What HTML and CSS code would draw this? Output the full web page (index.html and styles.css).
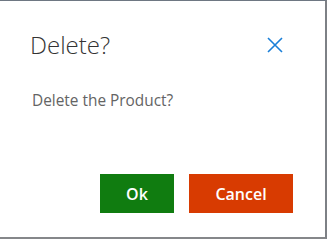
FILE: index.html
```html
<!DOCTYPE html>
<html>
<head>
    <meta charset="UTF-8">
    <title>Delete?</title>
    <link rel="stylesheet" href="styles.css">
</head>
<body>
    <div class="dialog">
        <div class="dialog-header">
            <div class="dialog-title">Delete?</div>
            <button class="close" title="Close">
                <svg width="16" height="16" viewBox="0 0 16 16">
                    <path d="M1 1 L15 15 M15 1 L1 15" stroke="#1a7fd8" stroke-width="1.6" fill="none"/>
                </svg>
            </button>
        </div>
        <div class="dialog-body">Delete the Product?</div>
        <div class="dialog-footer">
            <button class="button ok">Ok</button>
            <button class="button cancel">Cancel</button>
        </div>
    </div>
</body>
</html>
```

FILE: styles.css
```css
body {
    margin: 0;
    background: #fff;
    font-family: 'Open Sans', 'Noto Sans', sans-serif;
}
.dialog {
    box-sizing: border-box;
    width: 327px;
    height: 239px;
    background: #fff;
    border-top: 1px solid #6e7782;
    border-right: 2px solid #7d8085;
    border-bottom: 2px solid #85878a;
    padding: 27px 0 0 30px;
}
.dialog-header {
    display: flex;
    justify-content: space-between;
    align-items: flex-start;
    padding-right: 42px;
}
.dialog-title {
    font-size: 24px;
    font-weight: 300;
    color: #333;
    line-height: 34px;
}
.close {
    border: none;
    background: none;
    padding: 0;
    margin-top: 9px;
    width: 16px;
    height: 16px;
    cursor: pointer;
}
.close svg {
    display: block;
}
.dialog-body {
    margin: 29px 0 0 2px;
    font-size: 15.4px;
    color: #646464;
    line-height: 20px;
}
.dialog-footer {
    display: flex;
    justify-content: flex-end;
    gap: 15px;
    margin-top: 63px;
    padding-right: 32px;
}
.button {
    border: none;
    color: #fff;
    font-family: inherit;
    font-size: 16px;
    font-weight: 600;
    height: 39px;
    padding: 0;
    cursor: pointer;
}
.ok {
    background: #107c10;
    width: 74px;
}
.cancel {
    background: #d83b01;
    width: 104px;
}
```
